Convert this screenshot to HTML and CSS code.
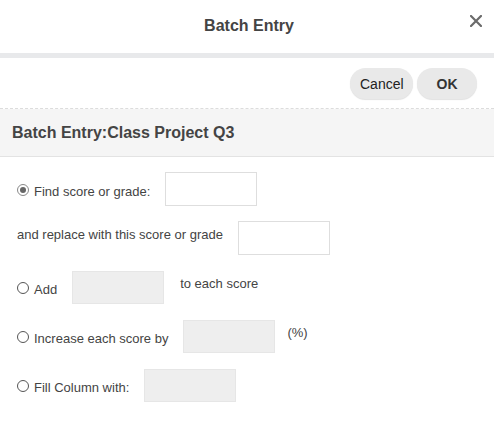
FILE: index.html
```html
<!DOCTYPE html>
<html>
<head>
<meta charset="utf-8">
<link rel="stylesheet" href="styles.css">
</head>
<body>
<div class="dialog">
  <div class="header">
    <div class="title">Batch Entry</div>
    <span class="close"><svg width="12" height="12" viewBox="0 0 12 12"><path d="M1 1L11 11M11 1L1 11" stroke="#6b6b6b" stroke-width="2.2" stroke-linecap="square"/></svg></span>
  </div>
  <div class="bar"></div>
  <div class="actions">
    <button class="btn btn-cancel">Cancel</button>
    <button class="btn btn-ok">OK</button>
  </div>
  <div class="section-head">Batch Entry:Class Project Q3</div>
  <div class="form">
    <div class="row">
      <span class="radio checked"></span>
      <span class="label">Find score or grade:</span>
      <span class="box"></span>
    </div>
    <div class="row">
      <span class="label plain raised">and replace with this score or grade</span>
      <span class="box"></span>
    </div>
    <div class="row">
      <span class="radio"></span>
      <span class="label">Add</span>
      <span class="box disabled"></span>
      <span class="suffix">to each score</span>
    </div>
    <div class="row">
      <span class="radio"></span>
      <span class="label">Increase each score by</span>
      <span class="box disabled"></span>
      <span class="suffix pct">(%)</span>
    </div>
    <div class="row">
      <span class="radio"></span>
      <span class="label">Fill Column with:</span>
      <span class="box disabled"></span>
    </div>
  </div>
</div>
</body>
</html>
```
FILE: styles.css
```css
html, body {
  margin: 0;
  padding: 0;
  background: #fff;
}
body {
  font-family: "Liberation Sans", Arial, sans-serif;
  color: #444;
}
.dialog {
  width: 494px;
}
.header {
  position: relative;
  height: 53px;
  display: flex;
  align-items: center;
  justify-content: center;
}
.title {
  font-size: 16px;
  font-weight: bold;
  color: #444;
  margin-left: 4px;
  margin-top: -1px;
}
.close {
  position: absolute;
  left: 470px;
  top: 15px;
  width: 12px;
  height: 12px;
  display: block;
}
.close svg {
  display: block;
}
.bar {
  height: 5px;
  background: #e8e9eb;
}
.actions {
  display: flex;
  justify-content: flex-end;
  align-items: flex-start;
  padding-top: 10px;
  padding-right: 17px;
  box-sizing: border-box;
  gap: 4px;
  border-bottom: 1px dashed #dcdcdc;
  height: 51px;
}
.btn {
  height: 31px;
  border: none;
  border-radius: 16px;
  background: #e9e9e9;
  box-shadow: 0 1px 1px rgba(0,0,0,0.12);
  font-family: "Liberation Sans", Arial, sans-serif;
  font-size: 14px;
  color: #333;
  padding: 0 10px;
  margin: 0;
}
.btn-cancel {
  width: 63px;
  font-weight: normal;
  color: #222;
}
.btn-ok {
  width: 60px;
  font-weight: bold;
  color: #333;
}
.section-head {
  height: 47px;
  background: #f5f5f5;
  border-bottom: 1px solid #e3e3e3;
  display: flex;
  align-items: center;
  padding-left: 12px;
  padding-top: 1px;
  box-sizing: border-box;
  height: 48px;
  font-size: 16px;
  font-weight: bold;
  color: #444;
}
.form {
  padding: 15px 0 0 17px;
  display: flex;
  flex-direction: column;
  gap: 15px;
}
.row {
  display: flex;
  align-items: center;
  height: 34px;
  font-size: 13px;
  color: #444;
}
.radio {
  width: 10px;
  height: 10px;
  border: 1px solid #555;
  border-radius: 50%;
  margin-right: 5px;
  margin-top: 2px;
  box-sizing: content-box;
  position: relative;
}
.radio.checked {
  border-color: #888;
}
.radio.checked::after {
  content: "";
  position: absolute;
  left: 2px;
  top: 2px;
  width: 6px;
  height: 6px;
  border-radius: 50%;
  background: #666;
}
.label {
  margin-top: 4px;
}
.label.plain {
  margin-top: 0;
}
.label.raised {
  margin-bottom: 8px;
}
.box {
  width: 92px;
  height: 34px;
  box-sizing: border-box;
  border: 1px solid #dedede;
  background: #fff;
  margin-left: 15px;
}
.box.disabled {
  background: #eeeeee;
  border-color: #e6e6e6;
  height: 33px;
}
.suffix {
  margin-left: 16px;
  margin-bottom: 7px;
}
.suffix.pct {
  margin-left: 12px;
}
```
